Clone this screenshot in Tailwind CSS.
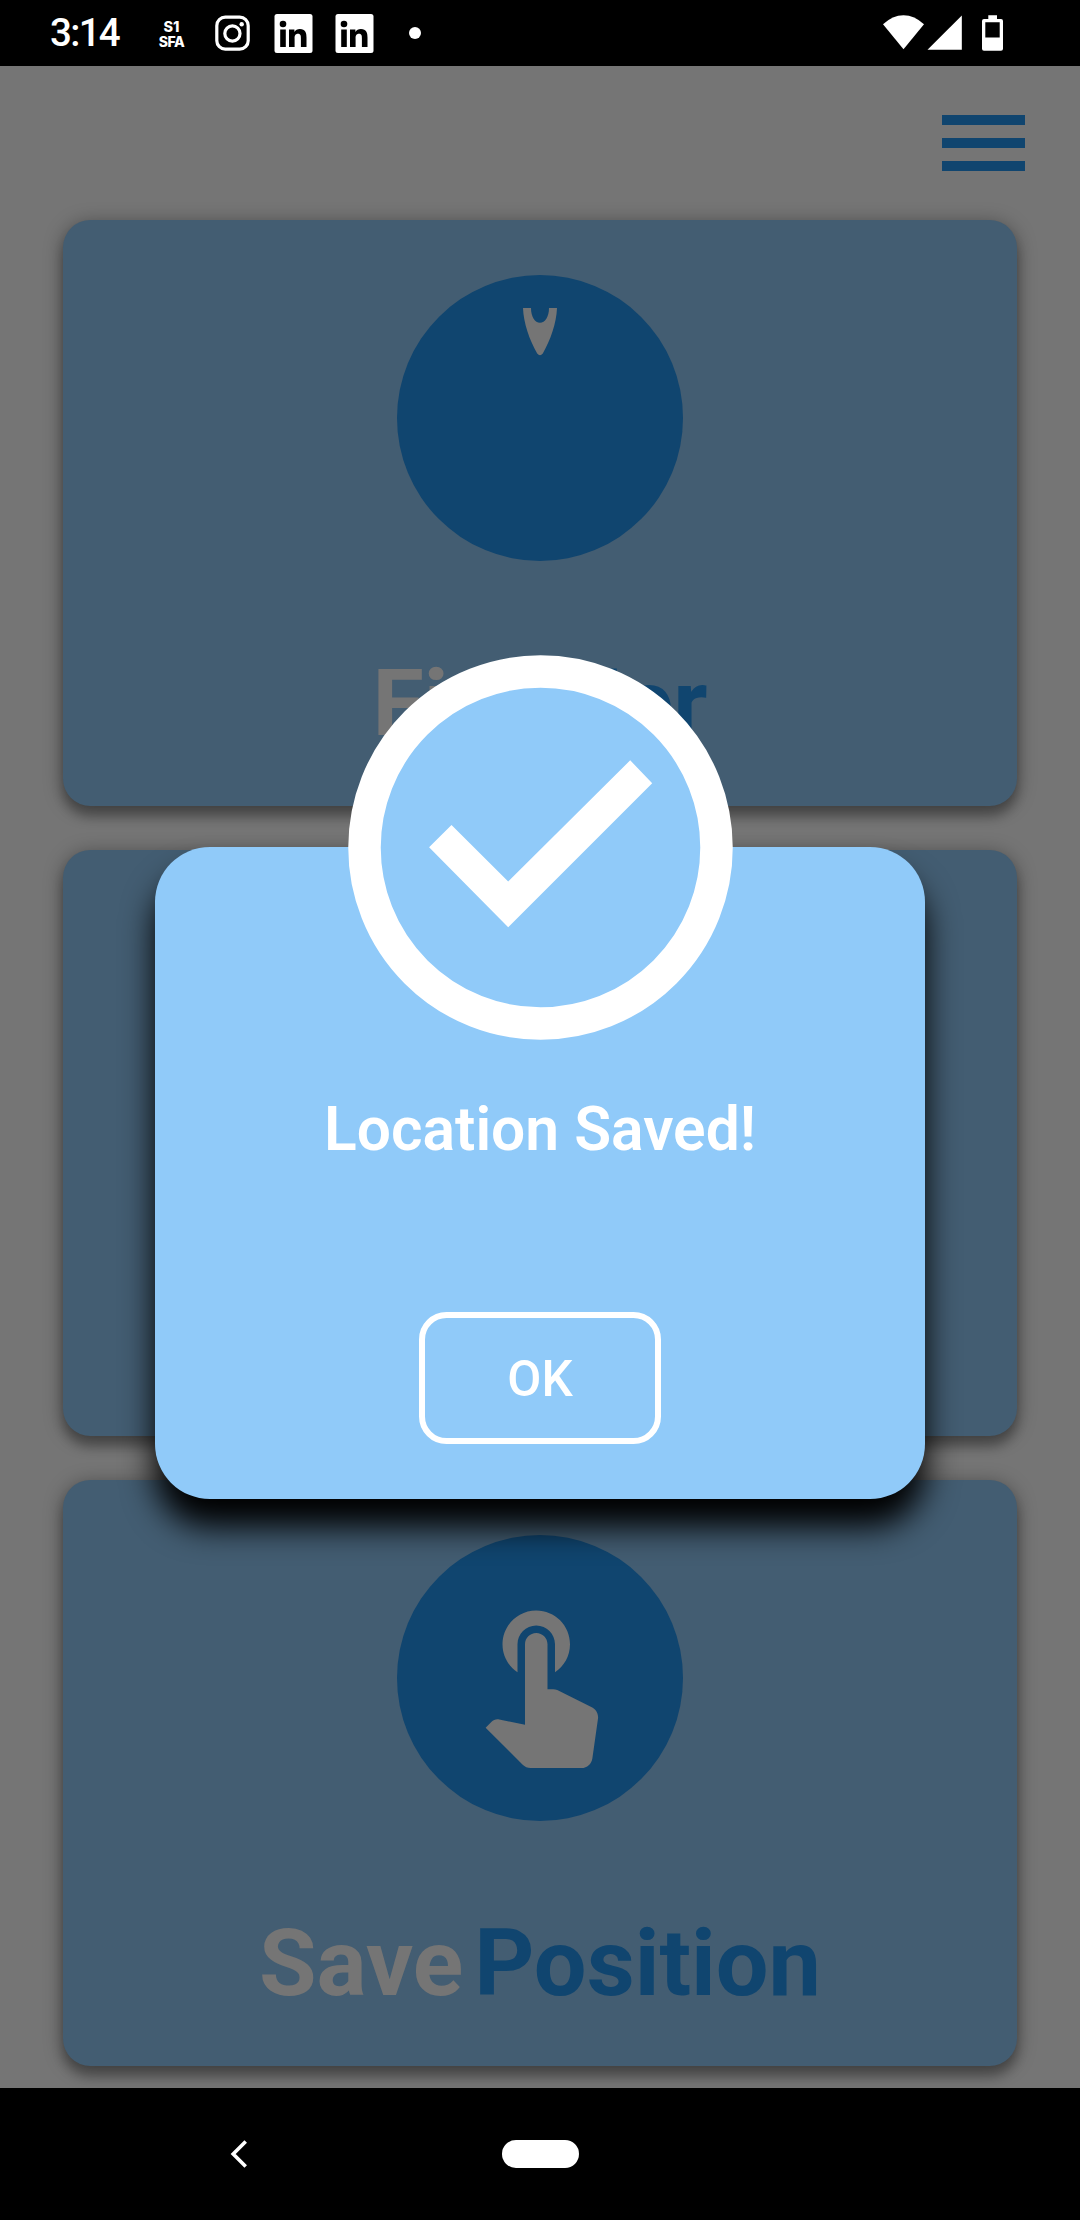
<!DOCTYPE html>
<html lang="en">
<head>
<meta charset="utf-8">
<title>Location Saved</title>
<script src="https://cdn.jsdelivr.net/npm/@tailwindcss/browser@4"></script>
</head>
<body class="relative flex h-[2220px] w-[1080px] flex-col overflow-hidden bg-[#757575] font-[Roboto,sans-serif]">

<!-- Status bar -->
<header class="flex h-[66px] shrink-0 items-center bg-black pl-[50px] pr-[77px] text-white">
  <span class="w-[108px] text-[38.5px] font-medium leading-none tracking-[-1.7px]">3:14</span>
  <span class="flex w-[27px] flex-col items-center gap-[2px] pt-[2px] font-[Inter,sans-serif] font-extrabold">
    <span class="text-[14.5px] leading-[13px]">S1</span>
    <span class="text-[14px] leading-[13px] tracking-[-0.4px]">SFA</span>
  </span>
  <svg class="ml-[30px] h-[36px] w-[35px]" viewBox="0 0 35 36" fill="none" stroke="#fff">
    <rect x="1.8" y="2.2" width="31.4" height="32" rx="8.5" stroke-width="3.2"/>
    <circle cx="17.4" cy="18.5" r="7.6" stroke-width="3.2"/>
    <circle cx="26.7" cy="9.3" r="2.2" fill="#fff" stroke="none"/>
  </svg>
  <svg class="ml-[24px] h-[40px] w-[39px]" viewBox="0 0 39 40">
    <rect x=".5" y="1" width="38" height="39" rx="2.5" fill="#fff"/>
    <circle cx="9" cy="11" r="3.3"/>
    <path d="M6.2 16.500h5.600V34H6.200zM15 16.500h5.400v2.400c1-1.800 3-2.900 5.500-2.900 5.500 0 6.600 3.600 6.600 8.400V34h-5.600v-8.500c0-2.100 0-4.700-2.900-4.700s-3.400 2.200-3.400 4.500V34H15z"/>
  </svg>
  <svg class="ml-[22px] h-[40px] w-[39px]" viewBox="0 0 39 40">
    <rect x=".5" y="1" width="38" height="39" rx="2.5" fill="#fff"/>
    <circle cx="9" cy="11" r="3.3"/>
    <path d="M6.2 16.500h5.600V34H6.200zM15 16.500h5.400v2.400c1-1.800 3-2.900 5.500-2.900 5.500 0 6.600 3.600 6.600 8.400V34h-5.600v-8.500c0-2.100 0-4.700-2.900-4.700s-3.400 2.200-3.400 4.500V34H15z"/>
  </svg>
  <span class="ml-[35px] size-3 rounded-full bg-white"></span>
  <svg class="ml-auto h-[36px] w-[120px]" viewBox="883 15 120 36" fill="#fff">
    <path d="M883 24.300Q892.500 15.200 903.500 15.200T924 24.300L903.500 49.300z"/>
    <path d="M927.500 49.700L961.800 15.500V49.700z"/>
    <path fill-rule="evenodd" d="M988.300 15.300h8.700V19h4a2 2 0 0 1 2 2v27.700a2 2 0 0 1-2 2h-17a2 2 0 0 1-2-2V21a2 2 0 0 1 2-2h4.300zM985.300 22.300v15.200h14.400V22.300z"/>
  </svg>
</header>

<!-- Menu bar -->
<div class="flex h-[154px] shrink-0 justify-end pr-[55px] pt-[49px]">
  <div class="flex w-[83px] flex-col gap-[13px]">
    <span class="h-[10px] bg-[#10456f]"></span>
    <span class="h-[10px] bg-[#10456f]"></span>
    <span class="h-[10px] bg-[#10456f]"></span>
  </div>
</div>

<!-- Cards, dimmed behind the dialog -->
<main class="flex h-[1868px] shrink-0 flex-col gap-[44px] px-[63px]">
  <section class="flex h-[586px] shrink-0 flex-col items-center rounded-[27.5px] bg-[#435d72] pt-[55px] shadow-[0_11px_11px_rgba(0,0,0,0.24),0_3px_19px_rgba(0,0,0,0.38)]">
    <div class="flex size-[286px] justify-center rounded-full bg-[#10456f] pt-[33px]">
      <svg class="h-[48px] w-[34px]" viewBox="0 0 34 48" fill="#757575"><path d="M0 0H8C8 9 12 14.700 17 14.700S26 9 26 0H34C33.500 15 27.500 32 19.800 45.500Q17 49 14.200 45.500C6.500 32 .5 15 0 0z"/></svg>
    </div>
    <h2 class="mt-[87px] flex gap-[3px] text-[93.5px] font-bold leading-[110px]"><span class="text-[#757575]">Find</span><span class="text-[#10456f]">Her</span></h2>
  </section>
  <section class="h-[586px] shrink-0 rounded-[27.5px] bg-[#435d72] shadow-[0_11px_11px_rgba(0,0,0,0.24),0_3px_19px_rgba(0,0,0,0.38)]"></section>
  <section class="flex h-[586px] shrink-0 flex-col items-center rounded-[27.5px] bg-[#435d72] pt-[55px] shadow-[0_11px_11px_rgba(0,0,0,0.24),0_3px_19px_rgba(0,0,0,0.38)]">
    <div class="flex size-[286px] items-center justify-center rounded-full bg-[#10456f]">
      <svg class="size-[180px]" viewBox="0 0 24 24" fill="#757575"><path d="M9 11.240V7.500C9 6.120 10.120 5 11.500 5S14 6.120 14 7.500v3.740c1.210-.81 2-2.180 2-3.740C16 5.010 13.990 3 11.500 3S7 5.010 7 7.500c0 1.560.79 2.930 2 3.740zm9.840 4.630l-4.540-2.260c-.17-.07-.35-.11-.54-.11H13v-6c0-.83-.67-1.500-1.500-1.500S10 6.670 10 7.500v10.740l-3.430-.72c-.08-.01-.15-.03-.24-.03-.31 0-.59.13-.79.33l-.79.8 4.940 4.940c.27.27.65.44 1.060.44h6.790c.75 0 1.330-.55 1.440-1.280l.75-5.270c.01-.07.02-.14.02-.2 0-.62-.38-1.160-.91-1.380z"/></svg>
    </div>
    <h2 class="mt-[87px] flex gap-[11px] text-[93.5px] font-bold leading-[110px]"><span class="text-[#757575]">Save</span><span class="text-[#10456f]">Position</span></h2>
  </section>
</main>

<!-- Navigation bar -->
<nav class="relative flex h-[132px] shrink-0 items-center bg-black pl-[230px]">
  <svg class="h-[28px] w-[18px]" viewBox="0 0 18 28" fill="none" stroke="#fff" stroke-width="3.600"><path d="M15.700 1.600L3.200 14.100L15.700 26.600"/></svg>
  <span class="ml-[254px] h-[28px] w-[77px] rounded-full bg-white"></span>
</nav>

<!-- Dialog -->
<div role="dialog" class="absolute left-[155px] top-[847px] flex h-[652px] w-[770px] flex-col items-center rounded-[55px] bg-[#90caf9] text-white shadow-[0_27.5px_33px_#000]">
  <svg class="-mt-[192px] size-[385px] shrink-0" viewBox="347.500 655 385 385">
    <circle cx="540" cy="847.500" r="176" fill="#90caf9" stroke="#fff" stroke-width="32.500"/>
    <path fill="#fff" d="M428.600 847.300L451 825L507.700 881.400L629.700 760.300L651.700 783.300L507.700 927.300z"/>
  </svg>
  <p class="mt-[55px] text-[60.5px] font-semibold leading-[70px]">Location Saved!</p>
  <button class="mt-[147px] h-[132px] w-[242px] rounded-[27.5px] border-[6px] border-white pt-[3px] text-[49.5px] font-medium leading-none">OK</button>
</div>
</body>
</html>
